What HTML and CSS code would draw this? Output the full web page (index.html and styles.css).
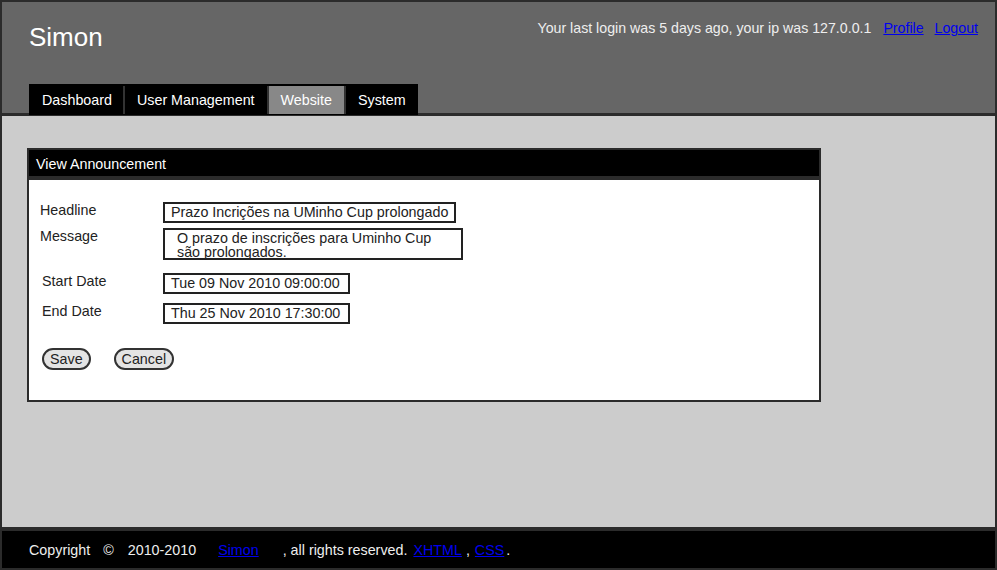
FILE: index.html
```html
<!DOCTYPE html>
<html lang="en">
<head>
<meta charset="utf-8">
<title>Simon - View Announcement</title>
<link rel="stylesheet" href="styles.css">
</head>
<body>
<div class="page">
  <header class="header">
    <div class="header-top">
      <div class="site-title">Simon</div>
      <div class="user-info">
        <span>Your last login was 5 days ago, your ip was 127.0.0.1</span>
        <a href="#" class="user-link">Profile</a>
        <a href="#" class="user-link">Logout</a>
      </div>
    </div>
    <nav class="nav">
      <a href="#" class="nav-item nav-first">Dashboard</a>
      <a href="#" class="nav-item">User Management</a>
      <a href="#" class="nav-item nav-active">Website</a>
      <a href="#" class="nav-item nav-last">System</a>
    </nav>
  </header>

  <main class="content">
    <section class="panel">
      <div class="panel-head">View Announcement</div>
      <div class="panel-body">
        <div class="row">
          <div class="label">Headline</div>
          <div class="field">Prazo Incrições na UMinho Cup prolongado</div>
        </div>
        <div class="row row-msg">
          <div class="label">Message</div>
          <div class="field field-msg">O prazo de inscrições para Uminho Cup são prolongados.</div>
        </div>
        <div class="row row-start">
          <div class="label label-date">Start Date</div>
          <div class="field field-date">Tue 09 Nov 2010 09:00:00</div>
        </div>
        <div class="row row-end">
          <div class="label label-date">End Date</div>
          <div class="field field-date">Thu 25 Nov 2010 17:30:00</div>
        </div>
        <div class="buttons">
          <button class="btn" type="button">Save</button>
          <button class="btn btn-cancel" type="button">Cancel</button>
        </div>
      </div>
    </section>
  </main>

  <footer class="footer">
    <span>Copyright</span>
    <span class="f-copy">&copy;</span>
    <span class="f-year">2010-2010</span>
    <a href="#" class="f-simon">Simon</a>
    <span class="f-rights">, all rights reserved.</span>
    <a href="#" class="f-xhtml">XHTML</a>
    <span class="f-comma">,</span>
    <a href="#" class="f-css">CSS</a>
    <span class="f-dot">.</span>
  </footer>
</div>
</body>
</html>
```
FILE: styles.css
```css
* { box-sizing: border-box; }

html, body {
  margin: 0;
  padding: 0;
}

body {
  font-family: "Liberation Sans", Arial, sans-serif;
  font-size: 14.3px;
  color: #222;
  background: #2b2b2b;
}

.page {
  width: 997px;
  height: 570px;
  border: 2px solid #2b2b2b;
  display: flex;
  flex-direction: column;
  overflow: hidden;
}

/* Header */
.header {
  height: 114px;
  background: #666;
  border-bottom: 3px solid #2b2b2b;
  flex: none;
}

.header-top {
  height: 82px;
  display: flex;
  justify-content: space-between;
  align-items: flex-start;
  padding: 0 17px 0 27px;
}

.site-title {
  margin-top: 20px;
  font-size: 26px;
  line-height: 30px;
  color: #fff;
}

.user-info {
  margin-top: 18px;
  line-height: 16px;
  font-size: 14.2px;
  color: #eee;
  display: flex;
}

.user-link {
  color: #0000ee;
  text-decoration: underline;
  margin-left: 12px;
}

.user-link + .user-link { margin-left: 11px; }

/* Nav */
.nav {
  margin-left: 27px;
  display: inline-flex;
  background: #000;
  padding-top: 2px;
  height: 31px;
  padding-bottom: 1px;
}

.nav-item {
  display: block;
  height: 28px;
  line-height: 28px;
  padding: 0 12px;
  color: #fff;
  text-decoration: none;
  border-left: 2px solid #333;
}

.nav-first {
  border-left: none;
  padding: 0 11px 0 13px;
}

.nav-active {
  background: #888;
  border-right: 2px solid #333;
}

.nav-last {
  border-left: none;
}

/* Content */
.content {
  flex: 1;
  background: #ccc;
  padding: 32px 0 0 25px;
}

.panel {
  width: 794px;
  border: 2px solid #2b2b2b;
  background: #fff;
}

.panel-head {
  height: 30px;
  background: #000;
  border-bottom: 4px solid #2b2b2b;
  color: #fff;
  font-size: 14.3px;
  line-height: 26px;
  padding: 1px 0 0 7px;
}

.panel-body {
  padding: 22px 10px 30px 11px;
}

.row {
  display: flex;
  align-items: flex-start;
}

.row-msg { margin-top: 5px; }
.row-start { margin-top: 13px; }
.row-end { margin-top: 9px; }

.label {
  width: 123px;
  flex: none;
  line-height: 14px;
  padding-top: 1px;
  color: #222;
}

.label-date {
  padding-left: 2px;
}

.field {
  border: 2px solid #222;
  padding: 0 6px;
  line-height: 17px;
  height: 21px;
  color: #222;
  white-space: nowrap;
}

.field-date {
  padding-right: 8px;
}

.field-msg {
  width: 300px;
  height: 32px;
  line-height: 14px;
  padding: 1px 12px 0 12px;
  white-space: normal;
}

.buttons {
  display: flex;
  margin-top: 24px;
  margin-left: 2px;
}

.btn {
  font-family: "Liberation Sans", Arial, sans-serif;
  font-size: 14.3px;
  color: #222;
  height: 22px;
  line-height: 18px;
  padding: 0 6px;
  border: 2px solid #333;
  border-radius: 11px;
  background: #e4e4e4;
  margin: 0;
}

.btn-cancel { margin-left: 23px; }

/* Footer */
.footer {
  flex: none;
  height: 41px;
  border-top: 4px solid #2b2b2b;
  background: #000;
  color: #eee;
  display: flex;
  align-items: center;
  padding-left: 27px;
  white-space: pre;
}

.footer a { color: #0000ee; text-decoration: underline; }

.f-copy { margin-left: 13px; }
.f-year { margin-left: 14px; }
.f-simon { margin-left: 22px; }
.f-rights { margin-left: 24px; }
.f-xhtml { margin-left: 6px; }
.f-comma { margin-left: 4px; }
.f-css { margin-left: 5px; }
.f-dot { margin-left: 2px; }
```
